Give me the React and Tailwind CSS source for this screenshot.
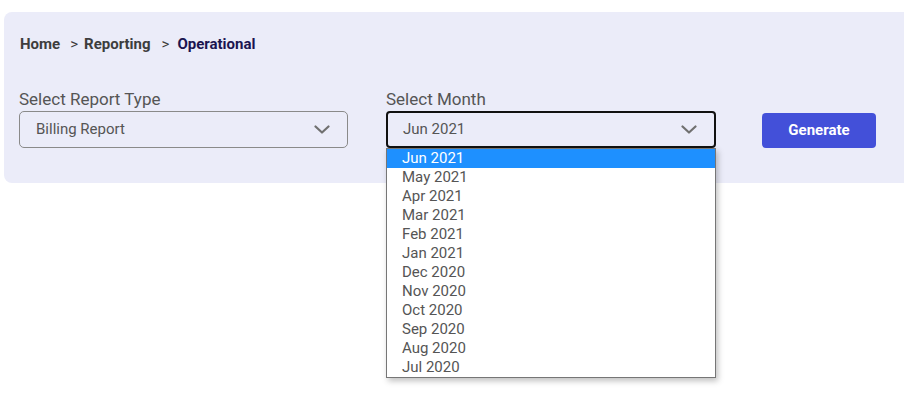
import React from 'react';

const months = [
    'Jun 2021', 'May 2021', 'Apr 2021', 'Mar 2021', 'Feb 2021', 'Jan 2021',
    'Dec 2020', 'Nov 2020', 'Oct 2020', 'Sep 2020', 'Aug 2020', 'Jul 2020',
];

const Chevron = () => (
    <svg width="16" height="9" viewBox="0 0 16 9" fill="none" stroke="#707070" strokeWidth="2.2" strokeLinecap="round" strokeLinejoin="round">
        <polyline points="1.5 1.5 8 7.5 14.5 1.5" />
    </svg>
);

const App = () => {
    return (
        <div className="w-[904px] h-[393px] bg-white font-['Roboto',sans-serif] pt-3 pl-1">
            <div className="h-[171px] bg-[#ebecf9] rounded-l-lg pt-[22px]">
                {/* Breadcrumb */}
                <div className="flex items-center pl-4 text-[15px] leading-5 font-bold">
                    <span className="text-[#3d3d3d]">Home</span>
                    <span className="ml-[10px] text-[#3d3d3d] font-normal">&gt;</span>
                    <span className="ml-[6px] text-[#3d3d3d]">Reporting</span>
                    <span className="ml-[11px] text-[#3d3d3d] font-normal">&gt;</span>
                    <span className="ml-[8px] text-[#1b1450]">Operational</span>
                </div>

                <div className="flex items-end pl-[15px] mt-[33px]">
                    <div className="flex flex-col">
                        <label className="text-[17px] leading-6 text-[#555]">Select Report Type</label>
                        <div className="w-[329px] h-[37px] border border-[#8a8a8a] rounded-[5px] flex items-center justify-between pl-4 pr-[17px]">
                            <span className="text-[15px] text-[#555]">Billing Report</span>
                            <Chevron />
                        </div>
                    </div>

                    <div className="flex flex-col ml-[38px] relative">
                        <label className="text-[17px] leading-6 text-[#555]">Select Month</label>
                        <div className="w-[330px] h-[37px] border-2 border-[#111] rounded-[4px] flex items-center justify-between pl-[15px] pr-[17px]">
                            <span className="text-[15px] text-[#555]">Jun 2021</span>
                            <Chevron />
                        </div>
                        {/* Open dropdown list */}
                        <div className="absolute left-0 top-[61px] w-[330px] bg-white border border-[#767676] shadow-[2px_3px_6px_rgba(0,0,0,0.25)] z-10">
                            {months.map((m, i) => (
                                <div
                                    key={m}
                                    className={`h-[19px] leading-[19px] pl-[15px] text-[15px] ${i === 0 ? 'bg-[#1e90ff] text-white' : 'text-[#555]'}`}
                                >
                                    {m}
                                </div>
                            ))}
                        </div>
                    </div>

                    <button className="ml-[46px] mb-0 w-[114px] h-[35px] bg-[#4350d9] rounded-[4px] text-white text-[15px] font-bold">
                        Generate
                    </button>
                </div>
            </div>
        </div>
    );
};

export default App;
